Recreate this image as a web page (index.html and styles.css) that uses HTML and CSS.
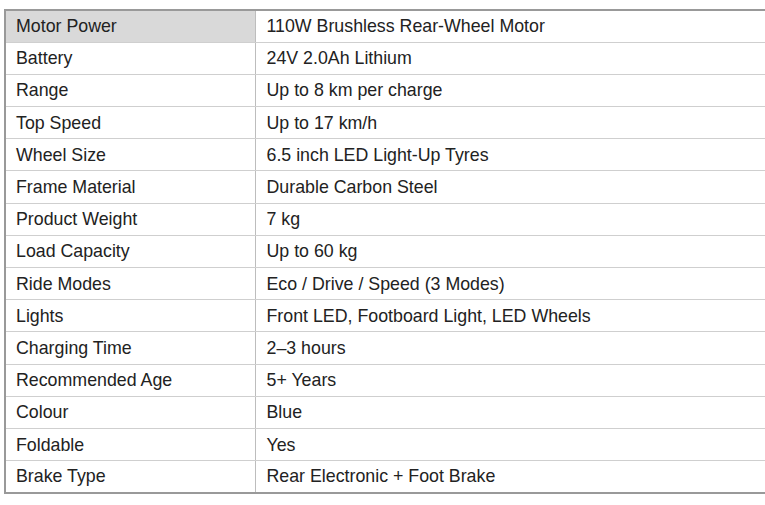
FILE: index.html
```html
<!DOCTYPE html>
<html lang="en">
<head>
<meta charset="utf-8">
<title>Specifications</title>
<link rel="stylesheet" href="styles.css">
</head>
<body>
<div class="wrap">
<table class="spec">
<tbody>
<tr><th class="hl">Motor Power</th><td>110W Brushless Rear-Wheel Motor</td></tr>
<tr><th>Battery</th><td>24V 2.0Ah Lithium</td></tr>
<tr><th>Range</th><td>Up to 8 km per charge</td></tr>
<tr><th>Top Speed</th><td>Up to 17 km/h</td></tr>
<tr><th>Wheel Size</th><td>6.5 inch LED Light-Up Tyres</td></tr>
<tr><th>Frame Material</th><td>Durable Carbon Steel</td></tr>
<tr><th>Product Weight</th><td>7 kg</td></tr>
<tr><th>Load Capacity</th><td>Up to 60 kg</td></tr>
<tr><th>Ride Modes</th><td>Eco / Drive / Speed (3 Modes)</td></tr>
<tr><th>Lights</th><td>Front LED, Footboard Light, LED Wheels</td></tr>
<tr><th>Charging Time</th><td>2–3 hours</td></tr>
<tr><th>Recommended Age</th><td>5+ Years</td></tr>
<tr><th>Colour</th><td>Blue</td></tr>
<tr><th>Foldable</th><td>Yes</td></tr>
<tr><th>Brake Type</th><td>Rear Electronic + Foot Brake</td></tr>
</tbody>
</table>
</div>
</body>
</html>
```
FILE: styles.css
```css
html, body {
  margin: 0;
  padding: 0;
  background: #ffffff;
  overflow: hidden;
}
.wrap {
  padding: 9px 0 0 4px;
}
.spec {
  border-collapse: collapse;
  width: 761px;
  font-family: "Liberation Sans", Arial, sans-serif;
  font-size: 17.8px;
  color: #222;
  border-top: 2px solid #999;
  border-left: 2px solid #999;
  border-bottom: 2px solid #999;
}
.spec th, .spec td {
  height: 32.2px;
  padding: 1px 0 0 10px;
  text-align: left;
  font-weight: normal;
  border: 1px solid #cfcfcf;
  box-sizing: border-box;
  vertical-align: middle;
}
.spec td {
  padding-left: 11px;
  border-right: none;
}
.spec th {
  width: 250px;
  border-right: 1px solid #bdbdbd;
}
.spec th.hl {
  background: #d9d9d9;
}
```
